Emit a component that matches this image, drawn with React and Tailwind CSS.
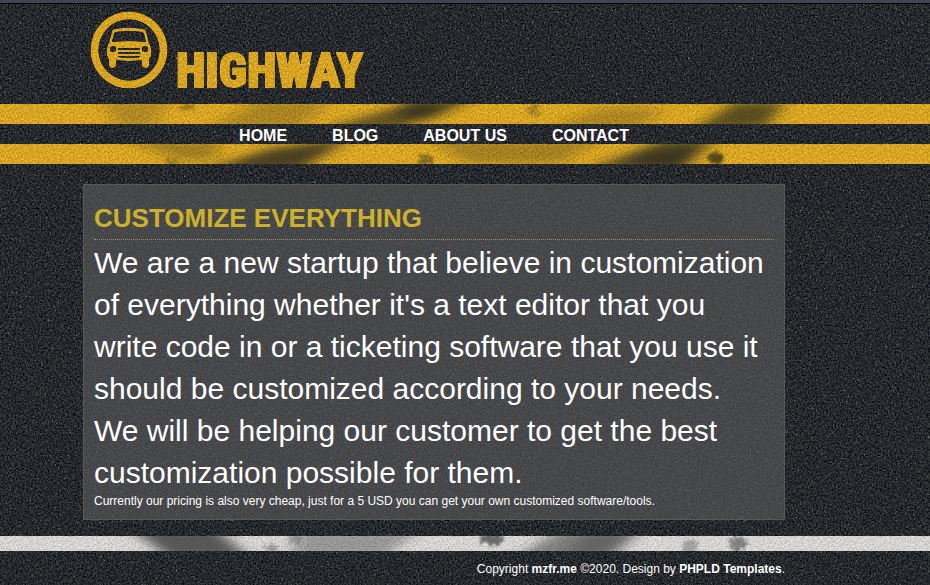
import React from "react";

const navItems = ["Home", "Blog", "About us", "Contact"];

function Textures() {
  return (
    <svg className="absolute size-0" aria-hidden="true">
      <defs>
        <filter id="asphalt" x="0" y="0" width="100%" height="100%" colorInterpolationFilters="sRGB">
          <feTurbulence type="fractalNoise" baseFrequency="0.6" numOctaves="3" seed="4" result="n" />
          <feColorMatrix in="n" values="0.45 0.15 0 0 -0.155  0.4 0.2 0 0 -0.145  0.35 0.15 0.1 0 -0.13  0 0 0 0 1" result="base" />
          <feTurbulence type="fractalNoise" baseFrequency="0.5" numOctaves="2" seed="21" />
          <feColorMatrix values="0 0 0.6 0 0.22  0 0.2 0.4 0 0.21  0 0.4 0 0 0.26  2.5 2.5 0 0 -3.1" result="grit" />
          <feMerge>
            <feMergeNode in="base" />
            <feMergeNode in="grit" />
          </feMerge>
        </filter>
        <filter id="paint" x="0" y="0" width="100%" height="100%" colorInterpolationFilters="sRGB">
          <feTurbulence type="fractalNoise" baseFrequency="0.6" numOctaves="3" seed="9" />
          <feColorMatrix values="0.6 0.2 0 0 0.1  0.8 0.2 0 0 0  0.5 0.5 0 0 0  0 0 0 0 1" result="n" />
          <feComposite in="SourceGraphic" in2="n" operator="arithmetic" k2="1" k3="0.5" k4="-0.27" result="b" />
          <feComposite in="b" in2="SourceAlpha" operator="in" />
        </filter>
        <filter id="smear" x="-20%" y="-100%" width="140%" height="300%">
          <feGaussianBlur stdDeviation="8 4" />
        </filter>
        <filter id="spot" x="-50%" y="-50%" width="200%" height="200%">
          <feTurbulence type="fractalNoise" baseFrequency="0.3" numOctaves="2" result="n" />
          <feDisplacementMap in="SourceGraphic" in2="n" scale="14" xChannelSelector="R" yChannelSelector="G" />
          <feGaussianBlur stdDeviation="1" />
        </filter>
      </defs>
    </svg>
  );
}

function Logo() {
  return (
    <a href="#home" aria-label="Highway" className="flex h-20 items-end gap-2 text-[#dca927] [filter:url(#paint)]">
      <svg viewBox="0 0 78 78" className="size-[78px] self-start" fill="none" aria-hidden="true">
        <circle cx="39" cy="39" r="34.5" stroke="currentColor" strokeWidth="8" />
        <path
          fill="currentColor"
          fillRule="evenodd"
          d="M25 18Q39 15 53 18Q55 18 56 20L59 32Q61 34 61 37V45L59 48V54Q59 57 56 57Q52 57 52 54V49Q39 51 26 49V54Q26 57 22 57Q19 57 19 54V48L17 45V37Q17 34 19 32L22 20Q23 18 25 18ZM26 21Q25 21 24 23L22 31Q39 29 56 31L54 23Q53 21 52 21Q39 19 26 21ZM23 35A3 3 0 1 0 23 41A3 3 0 1 0 23 35ZM55 35A3 3 0 1 0 55 41A3 3 0 1 0 55 35ZM28 37V39H50V37ZM28 41V43H50V41ZM28 45V46Q39 48 50 46V45Z"
        />
      </svg>
      <span className="font-['Roboto_Condensed','Open_Sans_Condensed','Noto_Sans_Condensed',Roboto,sans-serif] text-[48px] leading-10 font-black uppercase [-webkit-text-stroke:2px_#dca927]">
        Highway
      </span>
    </a>
  );
}

function YellowUpper() {
  return (
    <svg className="block h-5 w-full" aria-hidden="true">
      <rect width="100%" height="20" fill="#dcaa28" filter="url(#paint)" />
      <g fill="#24261f" filter="url(#smear)">
        <path d="M100 -4H170L150 24H120Z" opacity=".22" />
        <path d="M210 24L260 -4H330L300 24Z" opacity=".25" />
        <path d="M320 26L400 2H450L400 26Z" opacity=".65" />
        <path d="M395 12L410 -6H475L430 16Z" opacity=".7" />
        <path d="M550 24L600 4H665L640 24Z" opacity=".25" />
        <path d="M690 28L735 -2H785L765 24Z" opacity=".7" />
      </g>
      <g fill="#4b3e1c" filter="url(#spot)" opacity=".4">
        <rect x="181" y="0" width="13" height="6" />
        <rect x="528" y="2" width="12" height="8" />
      </g>
    </svg>
  );
}

function YellowLower() {
  return (
    <svg className="block h-5 w-full" aria-hidden="true">
      <rect width="100%" height="20" fill="#dcaa28" filter="url(#paint)" />
      <g fill="#24261f" filter="url(#smear)">
        <path d="M125 -4H220L215 16H180Z" opacity=".3" />
        <path d="M205 26L270 5L350 -6L300 26Z" opacity=".8" />
        <path d="M430 -4H600L560 20H470Z" opacity=".28" />
        <path d="M590 24L665 -4H715L680 26Z" opacity=".75" />
        <path d="M625 24L645 8L700 4L680 26Z" opacity=".5" />
      </g>
      <g fill="#2c291e" filter="url(#spot)">
        <rect x="166" y="15" width="10" height="6" opacity=".35" />
        <rect x="419" y="12" width="14" height="9" opacity=".5" />
        <ellipse cx="716" cy="14" rx="8" ry="6" opacity=".75" />
      </g>
    </svg>
  );
}

function WhiteLine() {
  return (
    <svg className="block h-[15px] w-full" aria-hidden="true">
      <rect width="100%" height="15" fill="#dad8d5" filter="url(#paint)" />
      <g fill="#3a3a3c" filter="url(#smear)">
        <path d="M130 -8H215L250 22H170Z" opacity=".8" />
        <path d="M300 -6H420L385 20H290Z" opacity=".4" />
        <path d="M515 22L560 -6H640L605 22Z" opacity=".55" />
        <path d="M560 20L590 -6H640L615 20Z" opacity=".4" />
      </g>
      <g fill="#3c3c3e" filter="url(#spot)">
        <ellipse cx="272" cy="12" rx="7" ry="4" opacity=".4" />
        <ellipse cx="295" cy="3" rx="8" ry="4" opacity=".35" />
        <ellipse cx="492" cy="3" rx="12" ry="6" opacity=".7" />
        <ellipse cx="690" cy="10" rx="8" ry="6" opacity=".35" />
        <ellipse cx="738" cy="7" rx="8" ry="8" opacity=".55" />
      </g>
    </svg>
  );
}

export default function App() {
  return (
    <div className="relative isolate min-h-screen overflow-hidden bg-[#24282b] font-['Liberation_Sans',Arial,sans-serif] text-white">
      <Textures />
      <svg className="absolute inset-0 -z-10 size-full" aria-hidden="true">
        <rect width="100%" height="100%" filter="url(#asphalt)" />
      </svg>

      <header>
        <div className="h-1 border-b border-black bg-[#42454f]" />
        <div className="mx-auto flex h-[100px] max-w-[764px] px-[7px] pt-[7px]">
          <Logo />
        </div>
        <YellowUpper />
        <div className="mx-auto max-w-[764px]">
          <nav className="flex h-5 max-w-[702px] items-center justify-center gap-[45px] pt-1">
            {navItems.map((item) => (
              <a key={item} href="#home" className="text-base leading-5 font-bold uppercase">
                {item}
              </a>
            ))}
          </nav>
        </div>
        <YellowLower />
      </header>

      <main className="mx-auto max-w-[764px] pt-5 pb-4">
        <section className="max-w-[702px] border border-[#606060]/70 bg-[#59595b]/65 p-2.5">
          <h1 className="border-b border-dotted border-[#a0905a] pt-2 pb-1.5 text-[26px] leading-[30px] font-bold text-[#cdb12b] uppercase">
            Customize everything
          </h1>
          <p className="pt-0.5 text-[30px] leading-[42px]">
            We are a new startup that believe in customization of everything whether it's a text editor that you
            write code in or a ticketing software that you use it should be customized according to your needs.
            <br />
            We will be helping our customer to get the best customization possible for them.
          </p>
          <p className="text-xs leading-[15px]">
            Currently our pricing is also very cheap, just for a 5 USD you can get your own customized
            software/tools.
          </p>
        </section>
      </main>

      <footer>
        <WhiteLine />
        <div className="mx-auto max-w-[764px] pt-2.5 pb-2">
          <p className="max-w-[702px] text-right text-xs leading-4">
            Copyright{" "}
            <a href="#home" className="font-bold">
              mzfr.me
            </a>{" "}
            ©2020. Design by{" "}
            <a href="#templates" className="font-bold">
              PHPLD Templates
            </a>
            .
          </p>
        </div>
      </footer>
    </div>
  );
}
